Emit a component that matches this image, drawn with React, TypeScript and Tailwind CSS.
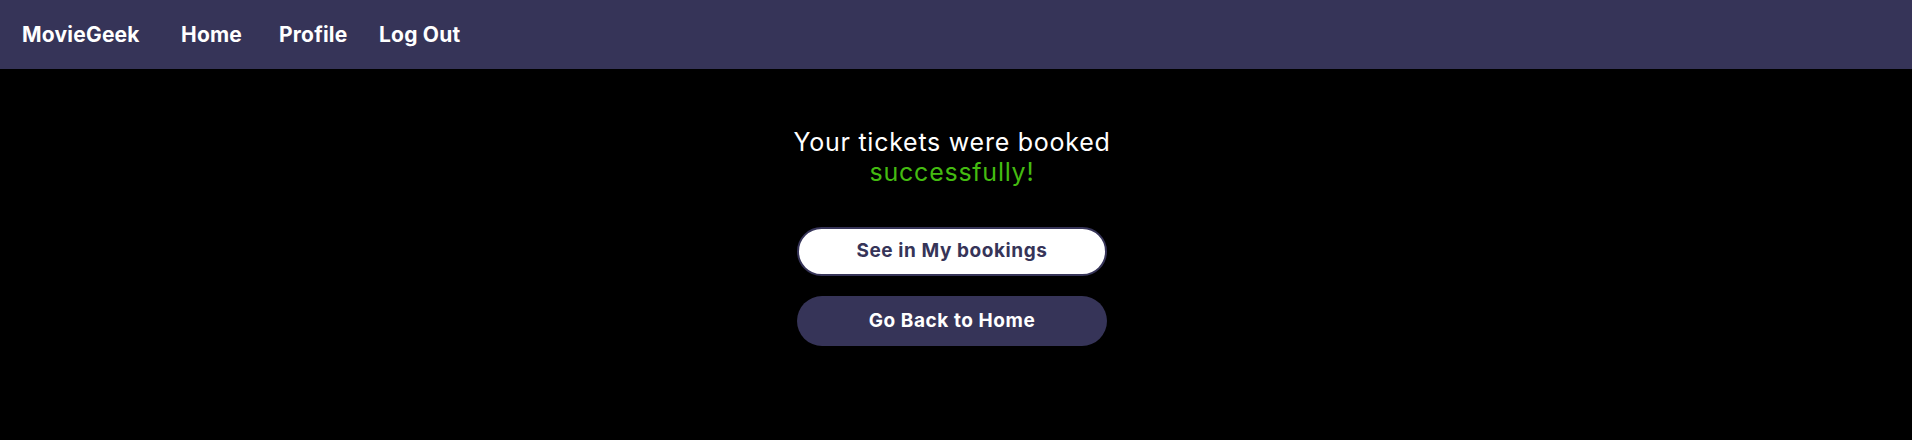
const App = () => {
    return (
        <div className="min-h-[440px] bg-black font-['Inter',sans-serif]">
            <nav className="flex flex-row items-center h-[69px] bg-[#363458] px-[22px]">
                <div className="text-white font-bold text-[21px] tracking-[0.01em] w-[159px]">MovieGeek</div>
                <div className="flex flex-row items-center">
                    <a className="text-white font-bold text-[21px] tracking-[0.01em] w-[98px]">Home</a>
                    <a className="text-white font-bold text-[21px] tracking-[0.01em] w-[100px]">Profile</a>
                    <a className="text-white font-bold text-[21px] tracking-[0.01em]">Log Out</a>
                </div>
            </nav>

            <div className="flex flex-col items-center pt-[58px] pr-[8px]">
                <div className="text-center text-[25px] tracking-[0.03em] leading-[30px] text-white">
                    Your tickets were booked
                    <br />
                    <span className="text-[#44bb11]">successfully!</span>
                </div>

                <button className="mt-[40px] w-[310px] h-[49px] rounded-full bg-white border-2 border-[#363458] text-[#363458] font-bold text-[19px] tracking-[0.03em]">
                    See in My bookings
                </button>

                <button className="mt-[20px] w-[310px] h-[50px] rounded-full bg-[#363458] text-white font-bold text-[19px] tracking-[0.03em]">
                    Go Back to Home
                </button>
            </div>
        </div>
    )
}

export default App
